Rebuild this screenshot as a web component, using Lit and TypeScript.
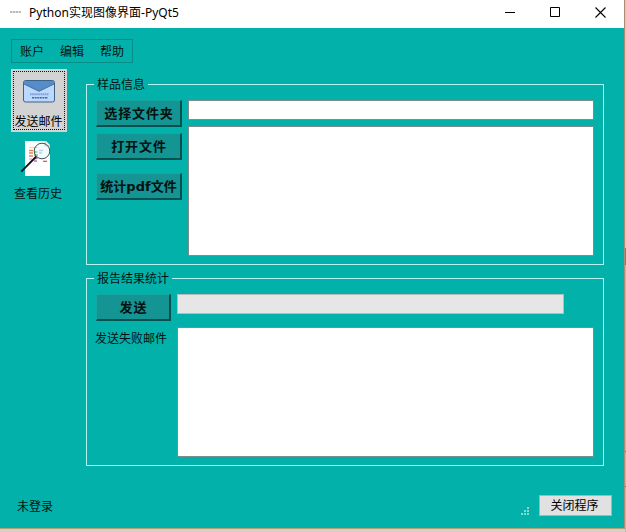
import { LitElement, html, css, svg } from "lit";
import { customElement } from "lit/decorators.js";

const mailIcon = svg`<svg width="32" height="23" viewBox="0 0 32 23">
  <rect x=".5" y=".5" width="31" height="21.5" rx="2" fill="#bad9fc" stroke="#3e6189"/>
  <path d="M1 1.5Q1 1 2 1H30Q31 1 31 2V4L16 11.3L1 4Z" fill="#548dca"/>
  <path d="M1 4L16 11.3L31 4" fill="none" stroke="#41658f" stroke-width=".9"/>
  <path d="M7 14.2H26" stroke="#879edb" stroke-width="2" stroke-dasharray="1.6 .5"/>
  <path d="M9 17.7H25" stroke="#4961b5" stroke-width="1.4" stroke-dasharray="2 .6"/>
</svg>`;

const historyIcon = svg`<svg width="32" height="37" viewBox="0 0 32 37">
  <path d="M5 1H26L30 5V36H5Z" fill="#fff"/>
  <path d="M25 1V6H30" fill="#e8e8e8" stroke="#999" stroke-width=".6"/>
  <path d="M9.5 7.5H19" stroke="#a8d8a0" stroke-dasharray="2 1"/>
  <path d="M9 10.5H13M9 13H13M9 16H13" stroke="#ed8154" stroke-width="1.4"/>
  <path d="M14 12H17.5M14 15H18" stroke="#5bae70" stroke-width="1.5"/>
  <path d="M19 10.5H23M19 13H22" stroke="#8fc6e9" stroke-width="1.4"/>
  <path d="M9 19H12" stroke="#c5b0dc" stroke-width="1.2"/>
  <path d="M14 18.5H17.5M14 21H17" stroke="#b576bc" stroke-width="1.5"/>
  <path d="M23 21.3H27" stroke="#d65353" stroke-width="1.2"/>
  <circle cx="22" cy="11" r="7.8" fill="#dff3f5" fill-opacity=".35" stroke="#454f50" stroke-width="1"/>
  <path d="M16.3 16.5L1.2 31.7" stroke="#111" stroke-width="1.8"/>
</svg>`;

@customElement("app-root")
export class AppRoot extends LitElement {
  static styles = css`
    :host { display: block; width: 626px; height: 532px; overflow: hidden; background: #d6cfcb;
      font: 12px/16px "Liberation Sans", "Noto Sans CJK SC", sans-serif; color: #021211; }
    * { box-sizing: border-box; }
    svg { display: block; flex: none; }
    .desktop { display: grid; grid-template-columns: 625px 1px; height: 532px; }
    .window { height: 529px; border-right: 1px solid #a98f70; border-bottom: 1px solid #b2a077;
      background: #02b1aa; display: flex; flex-direction: column; }
    .edge { background: linear-gradient(#dcc9b5 0 248px, #c95b5b 248px 265px, #c9b796 265px 451px, #806f5b 451px 452px, #cbb799 452px 486px, #806f5b 486px 487px, #cbb799 487px); }
    .titlebar { height: 28px; background: #fff; display: flex; align-items: center; padding: 0 18px 4px 10px; color: #000; }
    .logo { width: 11px; height: 2px; background: repeating-linear-gradient(90deg, #bbb 0 2px, #ddd 2px 3px); }
    .title { font-family: "Noto Sans", "Noto Sans CJK SC", sans-serif; margin-left: 8px; flex: 1; white-space: nowrap; letter-spacing: .02px; padding-top: 1px; }
    .controls { display: flex; gap: 35px; align-items: center; }
    .menu { margin: 11px 0 0 11px; width: 122px; height: 24px; border: 1px solid #058d87; display: flex; align-items: center; padding: 2px 0 0 8px; gap: 16px; }
    .body { display: flex; padding-left: 11px; height: 403px; }
    .tools { width: 75px; padding-top: 6px; }
    .tool { width: 56px; height: 63px; display: flex; flex-direction: column; align-items: center; white-space: nowrap; }
    .tool.on { background: #d3d3d3; padding-top: 11px; padding-right: 1px; outline: 1px dotted #111; outline-offset: -3px; color: #000; }
    .tool.on span { margin-top: 11px; }
    .tool.find { padding-top: 8px; margin-left: -1px; height: 70px; }
    .tool.find svg { margin-left: -4px; }
    .tool.find span { margin-top: 9px; }
    .groups { width: 518px; padding-top: 21px; display: flex; flex-direction: column; gap: 13px; }
    .group { border: 1px solid #b6f2ef; display: flex; position: relative; padding: 15px 9px 0; }
    .group.info { height: 181px; gap: 6px; }
    .group.report { height: 188px; flex-direction: column; gap: 13px; }
    .legend { position: absolute; left: 7px; top: -8px; background: #02b1aa; padding: 0 3px; white-space: nowrap; }
    .buttons { width: 86px; display: flex; flex-direction: column; gap: 6px; }
    .push { width: 86px; height: 27px; background: #149493; border: 1px solid #17a7a3; border-right: 2px solid #06514f; border-bottom: 2px solid #06514f;
      font-weight: 700; font-size: 13px; line-height: 26px; letter-spacing: .9px; text-indent: 1px; text-align: center; white-space: nowrap; color: #031110; }
    .push.pdf { margin-top: 7px; letter-spacing: 0; text-indent: 0; font-family: "DejaVu Sans", "Noto Sans CJK SC", sans-serif; }
    .push.send { width: 75px; }
    .fields { width: 406px; display: flex; flex-direction: column; gap: 6px; }
    .line, .area { background: #fff; border: 1px solid #7b8c8b; }
    .line { height: 20px; }
    .area { height: 130px; }
    .row { display: flex; gap: 6px; }
    .row.top { height: 20px; }
    .progress { width: 387px; height: 20px; background: #e6e6e6; border: 1px solid #b5bcbb; }
    .failed { width: 75px; padding-top: 4px; margin-left: -1px; margin-right: 1px; white-space: nowrap; }
    .failarea { width: 417px; }
    .status { display: flex; align-items: flex-start; padding: 29px 12px 0 17px; }
    .login { flex: 1; padding-top: 4px; }
    .grip { margin: 12px 10px 0 0; }
    .close { width: 73px; height: 21px; background: #e1e1e1; border: 1px solid #adb3b2; text-align: center; line-height: 21px; padding-right: 2px; color: #000; white-space: nowrap; }
  `;

  render() {
    return html`<div class="desktop">
      <div class="window">
        <div class="titlebar">
          <div class="logo"></div>
          <div class="title">Python实现图像界面-PyQt5</div>
          <div class="controls">
            <svg width="10" height="10"><path d="M0 5.5H10" stroke="#000"/></svg>
            <svg width="10" height="10"><path d="M.5 .5H9.5V9.5H.5Z" fill="none" stroke="#000"/></svg>
            <svg width="11" height="11"><path d="M.5 .5L10.5 10.5M10.5 .5L.5 10.5" stroke="#000" stroke-width="1.1"/></svg>
          </div>
        </div>
        <div class="menu"><span>账户</span><span>编辑</span><span>帮助</span></div>
        <div class="body">
          <div class="tools">
            <div class="tool on">${mailIcon}<span>发送邮件</span></div>
            <div class="tool find">${historyIcon}<span>查看历史</span></div>
          </div>
          <div class="groups">
            <div class="group info">
              <div class="legend">样品信息</div>
              <div class="buttons">
                <div class="push">选择文件夹</div>
                <div class="push">打开文件</div>
                <div class="push pdf">统计pdf文件</div>
              </div>
              <div class="fields"><div class="line"></div><div class="area"></div></div>
            </div>
            <div class="group report">
              <div class="legend">报告结果统计</div>
              <div class="row top"><div class="push send">发送</div><div class="progress"></div></div>
              <div class="row"><div class="failed">发送失败邮件</div><div class="area failarea"></div></div>
            </div>
          </div>
        </div>
        <div class="status">
          <div class="login">未登录</div>
          <svg class="grip" width="8" height="8" fill="#8bd6d2"><path d="M6 0h2v2H6zM3 3h2v2H3zM6 3h2v2H6zM0 6h2v2H0zM3 6h2v2H3zM6 6h2v2H6z"/></svg>
          <div class="close">关闭程序</div>
        </div>
      </div>
      <div class="edge"></div>
    </div>`;
  }
}
